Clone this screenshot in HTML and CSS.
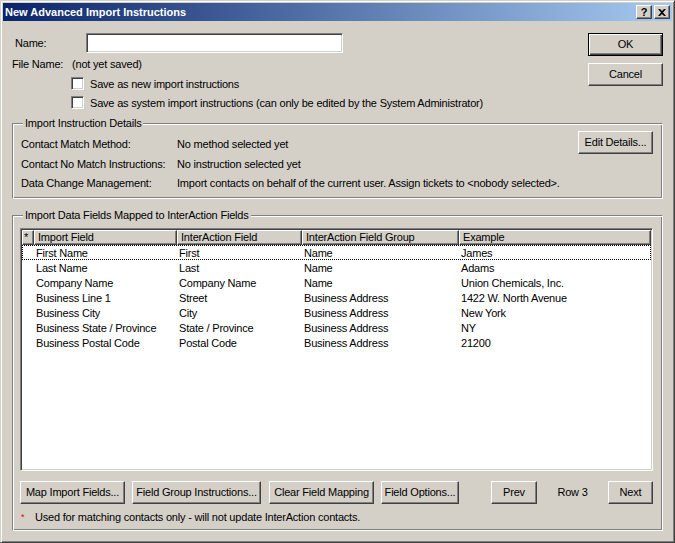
FILE: index.html
```html
<!DOCTYPE html>
<html lang="en">
<head>
  <meta charset="UTF-8" />
  <title>New Advanced Import Instructions</title>
  <link rel="stylesheet" href="styles.css">
</head>
<body>
  <div class="window">
    <div class="titlebar">
      <span class="title">New Advanced Import Instructions</span>
      <div class="caption-btns">
        <span class="cap-btn">?</span>
        <span class="cap-btn">
          <svg width="8" height="7" viewBox="0 0 8 7"><path d="M0 0h2l2 2 2-2h2L5 3.5 8 7H6L4 5 2 7H0l3-3.5z" fill="#000"/></svg>
        </span>
      </div>
    </div>

    <div class="client">
      <div class="top">
        <div class="fields">
          <div class="name-row">
            <span class="name-label">Name:</span>
            <span class="textbox"></span>
          </div>
          <div class="file-row">
            <span class="file-label">File Name:</span>
            <span>(not yet saved)</span>
          </div>
          <div class="check-row">
            <span class="checkbox"></span>
            <span>Save as new import instructions</span>
          </div>
          <div class="check-row">
            <span class="checkbox"></span>
            <span>Save as system import instructions (can only be edited by the System Administrator)</span>
          </div>
        </div>
        <div class="dlg-buttons">
          <button class="btn default">OK</button>
          <button class="btn">Cancel</button>
        </div>
      </div>

      <!-- instruction details -->
      <div class="group details">
        <span class="group-title">Import Instruction Details</span>
        <div class="info">
          <div class="info-row"><span class="info-label">Contact Match Method:</span><span>No method selected yet</span></div>
          <div class="info-row second"><span class="info-label">Contact No Match Instructions:</span><span>No instruction selected yet</span></div>
          <div class="info-row"><span class="info-label">Data Change Management:</span><span>Import contacts on behalf of the current user. Assign tickets to &lt;nobody selected&gt;.</span></div>
        </div>
        <button class="btn">Edit Details...</button>
      </div>

      <!-- field mapping list -->
      <div class="group mapped">
        <span class="group-title">Import Data Fields Mapped to InterAction Fields</span>
        <div class="listview">
          <div class="lv-header">
            <div class="hcell c0">*</div>
            <div class="hcell c1">Import Field</div>
            <div class="hcell c2">InterAction Field</div>
            <div class="hcell c3">InterAction Field Group</div>
            <div class="hcell c4">Example</div>
          </div>
          <div class="lv-row focus">
            <div class="cell c0"></div><div class="cell c1">First Name</div><div class="cell c2">First</div><div class="cell c3">Name</div><div class="cell c4">James</div>
          </div>
          <div class="lv-row">
            <div class="cell c0"></div><div class="cell c1">Last Name</div><div class="cell c2">Last</div><div class="cell c3">Name</div><div class="cell c4">Adams</div>
          </div>
          <div class="lv-row">
            <div class="cell c0"></div><div class="cell c1">Company Name</div><div class="cell c2">Company Name</div><div class="cell c3">Name</div><div class="cell c4">Union Chemicals, Inc.</div>
          </div>
          <div class="lv-row">
            <div class="cell c0"></div><div class="cell c1">Business Line 1</div><div class="cell c2">Street</div><div class="cell c3">Business Address</div><div class="cell c4">1422 W. North Avenue</div>
          </div>
          <div class="lv-row">
            <div class="cell c0"></div><div class="cell c1">Business City</div><div class="cell c2">City</div><div class="cell c3">Business Address</div><div class="cell c4">New York</div>
          </div>
          <div class="lv-row">
            <div class="cell c0"></div><div class="cell c1">Business State / Province</div><div class="cell c2">State / Province</div><div class="cell c3">Business Address</div><div class="cell c4">NY</div>
          </div>
          <div class="lv-row">
            <div class="cell c0"></div><div class="cell c1">Business Postal Code</div><div class="cell c2">Postal Code</div><div class="cell c3">Business Address</div><div class="cell c4">21200</div>
          </div>
        </div>

        <div class="map-actions">
          <button class="btn b-map">Map Import Fields...</button>
          <button class="btn b-group">Field Group Instructions...</button>
          <button class="btn b-clear">Clear Field Mapping</button>
          <button class="btn b-options">Field Options...</button>
          <div class="nav">
            <button class="btn b-prev">Prev</button>
            <span class="row-label">Row 3</span>
            <button class="btn b-next">Next</button>
          </div>
        </div>

        <div class="footnote">
          <span class="req">*</span>
          <span>Used for matching contacts only - will not update InterAction contacts.</span>
        </div>
      </div>
    </div>
  </div>
</body>
</html>
```

FILE: styles.css
```css
body {
  margin: 0;
  font-family: "Liberation Sans", Arial, sans-serif;
  font-size: 11px;
  letter-spacing: -0.2px;
  color: #000;
  background: #d4d0c8;
}
.window {
  width: 675px;
  height: 543px;
  box-sizing: border-box;
  border: 1px solid;
  border-color: #d4d0c8 #404040 #404040 #d4d0c8;
  box-shadow: inset 1px 1px #fff, inset -1px -1px #808080;
  padding: 2px;
  background: #d4d0c8;
}
.titlebar {
  height: 18px;
  display: flex;
  align-items: center;
  justify-content: space-between;
  padding: 0 2px;
  background: linear-gradient(to right, #0a246a, #a6caf0);
}
.title {
  color: #fff;
  font-weight: bold;
  letter-spacing: 0;
}
.caption-btns {
  display: flex;
  gap: 2px;
}
.cap-btn {
  width: 16px;
  height: 14px;
  box-sizing: border-box;
  display: flex;
  align-items: center;
  justify-content: center;
  background: #d4d0c8;
  border: 1px solid;
  border-color: #fff #404040 #404040 #fff;
  box-shadow: inset -1px -1px #808080;
  font-weight: bold;
  line-height: 12px;
}
.client {
  padding: 0 9px;
}

/* top part */
.top {
  display: flex;
  justify-content: space-between;
  margin-top: 12px;
}
.name-row {
  display: flex;
  align-items: center;
  height: 20px;
}
.name-label {
  width: 71px;
  padding-left: 3px;
}
.textbox, .checkbox {
  box-sizing: border-box;
  background: #fff;
  border: 1px solid;
  border-color: #808080 #fff #fff #808080;
  box-shadow: inset 1px 1px #404040, inset -1px -1px #d4d0c8;
}
.textbox {
  width: 257px;
  height: 20px;
}
.file-row {
  display: flex;
  margin-top: 5px;
  line-height: 13px;
}
.file-label {
  width: 60px;
}
.check-row {
  display: flex;
  align-items: center;
  height: 13px;
  margin-top: 6px;
  padding-left: 59px;
}
.checkbox {
  width: 13px;
  height: 13px;
  margin-right: 6px;
}
.dlg-buttons {
  display: flex;
  flex-direction: column;
  gap: 7px;
}

/* buttons */
.btn {
  width: 75px;
  height: 23px;
  padding: 0 0 1px;
  font: inherit;
  letter-spacing: inherit;
  color: #000;
  background: #d4d0c8;
  border: 1px solid;
  border-color: #fff #404040 #404040 #fff;
  box-shadow: inset -1px -1px #808080;
  white-space: nowrap;
}
.btn.default {
  border-color: #000;
  box-shadow: inset 1px 1px #fff, inset -1px -1px #404040, inset -2px -2px #808080;
}

/* group boxes */
.group {
  position: relative;
  box-sizing: border-box;
  border: 1px solid;
  border-color: #808080 #fff #fff #808080;
  box-shadow: inset 1px 1px #fff, inset -1px -1px #808080;
}
.group-title {
  position: absolute;
  top: -7px;
  left: 10px;
  padding: 0 2px;
  line-height: 13px;
  background: #d4d0c8;
}
.details {
  display: flex;
  height: 76px;
  margin-top: 14px;
  padding: 7px 9px 0 8px;
}
.info {
  flex: 1;
  margin-top: 4px;
}
.info-row {
  display: flex;
  line-height: 19px;
  white-space: nowrap;
}
.info-row.second {
  padding-top: 1px;
}
.info-label {
  width: 156px;
}
.mapped {
  height: 316px;
  margin-top: 16px;
  padding: 12px 9px 0 7px;
}

/* list view */
.listview {
  height: 243px;
  box-sizing: border-box;
  padding: 1px;
  background: #fff;
  border: 1px solid;
  border-color: #808080 #fff #fff #808080;
  box-shadow: inset 1px 1px #404040, inset -1px -1px #d4d0c8;
}
.lv-header {
  display: flex;
  height: 15px;
  background: #d4d0c8;
}
.hcell {
  box-sizing: border-box;
  height: 15px;
  padding-left: 3px;
  line-height: 13px;
  border: 1px solid;
  border-color: #fff #404040 #404040 #fff;
  box-shadow: inset -1px -1px #808080;
  white-space: nowrap;
  overflow: hidden;
}
.hcell.c0 {
  padding-left: 1px;
}
.lv-row {
  display: flex;
  height: 15px;
  line-height: 14px;
}
.lv-row.focus {
  outline: 1px dotted #000;
  outline-offset: -1px;
}
.cell {
  box-sizing: border-box;
  padding: 1px 0 0 2px;
  white-space: nowrap;
  overflow: hidden;
}
.c0 { width: 12px; }
.c1 { width: 143px; }
.c2 { width: 125px; }
.c3 { width: 157px; }
.c4 { width: 192px; }

/* actions under the list */
.map-actions {
  display: flex;
  margin-top: 10px;
}
.b-map { width: 105px; }
.b-group { width: 129px; margin-left: 7px; }
.b-clear { width: 105px; margin-left: 8px; }
.b-options { width: 78px; margin-left: 7px; }
.nav {
  display: flex;
  margin-left: auto;
}
.b-prev { width: 46px; }
.b-next { width: 45px; }
.row-label {
  width: 71px;
  line-height: 23px;
  text-align: center;
}
.footnote {
  display: flex;
  margin-top: 7px;
  line-height: 13px;
}
.req {
  width: 15px;
  padding-left: 1px;
  box-sizing: border-box;
  color: #e00000;
  font-size: 9px;
}
```
